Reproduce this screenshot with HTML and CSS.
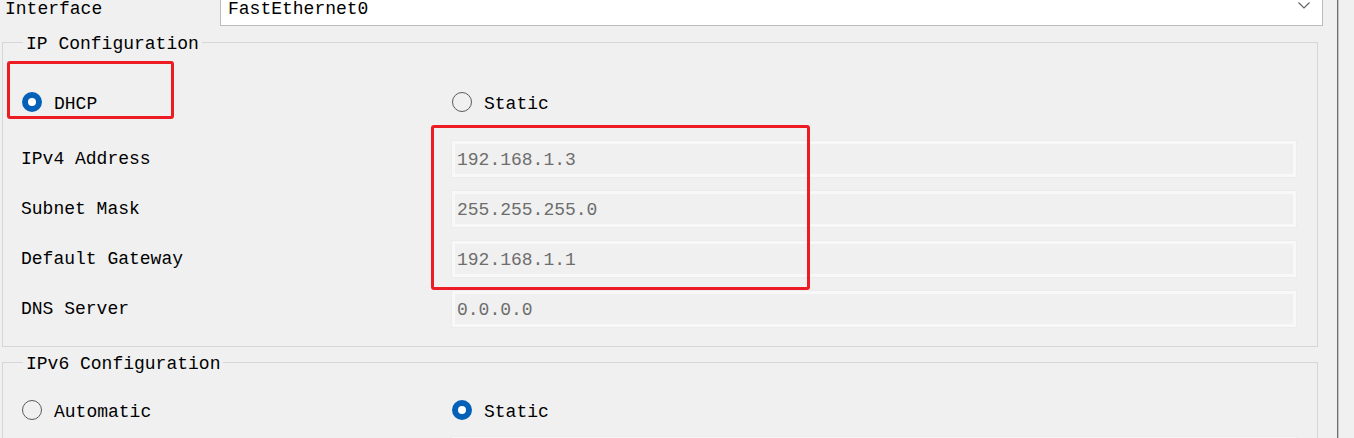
FILE: index.html
```html
<!DOCTYPE html>
<html>
<head>
<meta charset="utf-8">
<title>FastEthernet0</title>
<link rel="stylesheet" href="styles.css">
</head>
<body>
<div class="page">
  <main class="main">
    <div class="iface-row">
      <div class="iface-label">Interface</div>
      <div class="combo">
        <span class="combo-text">FastEthernet0</span>
        <svg class="chev" width="12" height="7" viewBox="0 0 12 7"><path d="M0.5 0.5 L6 6 L11.5 0.5" fill="none" stroke="#606060" stroke-width="1.1"/></svg>
      </div>
    </div>

    <section class="group group-v4">
      <span class="legend">IP Configuration</span>
      <div class="radio-row">
        <label class="radio"><span class="dot checked"></span><span class="rtext">DHCP</span></label>
        <label class="radio"><span class="dot"></span><span class="rtext">Static</span></label>
      </div>
      <div class="fields">
        <div class="flabel">IPv4 Address</div><div class="field">192.168.1.3</div>
        <div class="flabel">Subnet Mask</div><div class="field">255.255.255.0</div>
        <div class="flabel">Default Gateway</div><div class="field">192.168.1.1</div>
        <div class="flabel">DNS Server</div><div class="field">0.0.0.0</div>
      </div>
    </section>

    <section class="group group-v6">
      <span class="legend">IPv6 Configuration</span>
      <div class="radio-row radio-row-v6">
        <label class="radio"><span class="dot"></span><span class="rtext">Automatic</span></label>
        <label class="radio"><span class="dot checked"></span><span class="rtext">Static</span></label>
      </div>
      <div class="fields">
        <div class="flabel"></div><div class="field"></div>
      </div>
    </section>
  </main>
  <div class="divider"></div>
  <div class="rest"></div>

  <div class="mark mark-dhcp"></div>
  <div class="mark mark-fields"></div>
</div>
</body>
</html>
```

FILE: styles.css
```css
html, body {
  margin: 0;
  padding: 0;
  background: #f0f0f0;
  overflow: hidden;
}
body {
  width: 1354px;
  height: 438px;
  font-family: "Liberation Mono", "DejaVu Sans Mono", monospace;
  font-size: 18px;
  color: #000;
}
.page {
  position: relative;
  display: flex;
  height: 438px;
  overflow: hidden;
}
.main {
  width: 1337px;
  flex: none;
}
.divider {
  width: 1px;
  background: #6e6e6e;
  border-right: 1px solid #c4c4c4;
  flex: none;
}
.rest {
  flex: 1;
}

/* interface row */
.iface-row {
  display: flex;
  height: 26px;
}
.iface-label {
  width: 215px;
  padding-left: 5px;
  padding-top: 2px;
  line-height: 14px;
}
.combo {
  width: 1094px;
  height: 25px;
  background: #fff;
  border: 1px solid #bcbcbc;
  border-top: none;
  display: flex;
  align-items: flex-start;
  padding-left: 7px;
  box-sizing: content-box;
  position: relative;
}
.combo-text {
  line-height: 14px;
  padding-top: 2px;
  flex: 1;
}
.chev {
  margin-top: 2px;
  margin-right: 12px;
}

/* groups */
.group {
  position: relative;
  margin-left: 2px;
  border: 1px solid #d6d6d6;
}
.group-v4 {
  margin-top: 16px;
  padding: 47px 0 19px 19px;
  width: 1295px;
}
.group-v6 {
  margin-top: 15px;
  padding: 35px 0 0 19px;
  width: 1295px;
  border-bottom: none;
}
.legend {
  position: absolute;
  top: -9px;
  left: 20px;
  padding: 0 3px;
  background: #f0f0f0;
  line-height: 20px;
}

.radio-row {
  display: grid;
  grid-template-columns: 430px 844px;
  height: 20px;
}
.radio {
  display: flex;
  align-items: center;
  gap: 12px;
  line-height: 20px;
}
.rtext {
  padding-top: 4px;
}
.dot {
  width: 20px;
  height: 20px;
  box-sizing: border-box;
  border-radius: 50%;
  border: 1px solid #5a5a5a;
  flex: none;
}
.dot.checked {
  border: 6px solid #0560b8;
  background: #fff;
}

.fields {
  display: grid;
  grid-template-columns: 431px 844px;
  grid-auto-rows: 36px;
  row-gap: 14px;
  margin-top: 31px;
  margin-left: -1px;
}
.radio-row-v6 + .fields {
  margin-top: 19px;
}
.flabel {
  display: flex;
  align-items: center;
  line-height: 20px;
}
.field {
  border: 3px solid #f8f8f8;
  box-shadow: 0 0 0 1px #ececec;
  background: #f0f0f0;
  padding-left: 2px;
  padding-top: 1px;
  display: flex;
  align-items: center;
  color: #6d6d6d;
  line-height: 20px;
}

/* red annotation boxes */
.mark {
  position: absolute;
  border: 3px solid #ed1c24;
  border-radius: 3px;
  box-sizing: border-box;
}
.mark-dhcp {
  left: 7px;
  top: 61px;
  width: 167px;
  height: 58px;
}
.mark-fields {
  left: 431px;
  top: 125px;
  width: 379px;
  height: 165px;
}
```
